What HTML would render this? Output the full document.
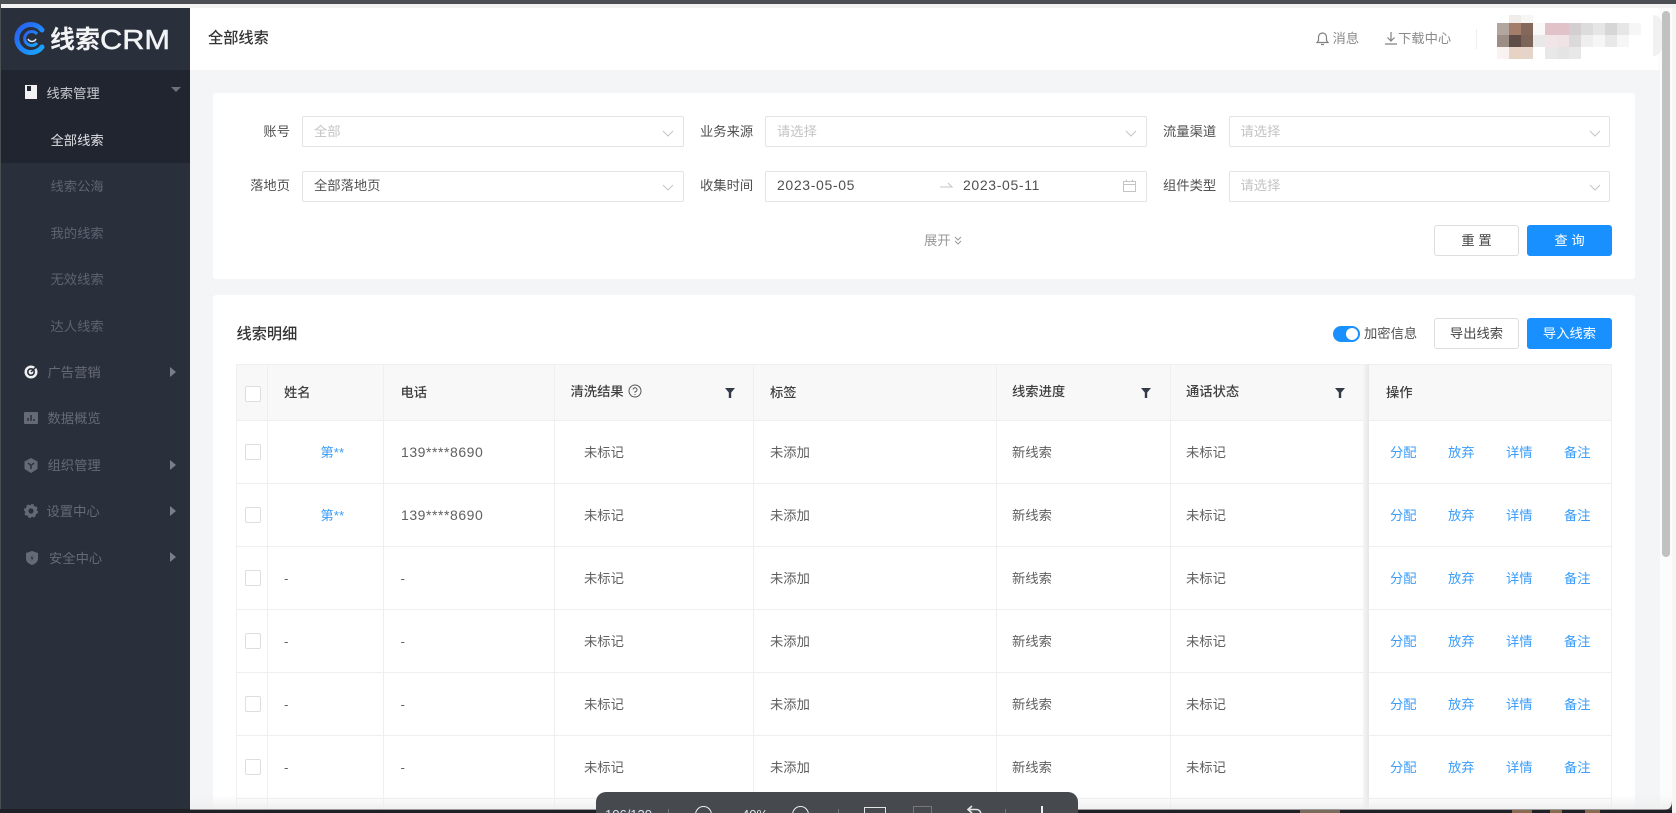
<!DOCTYPE html>
<html lang="zh-CN">
<head>
<meta charset="utf-8">
<title>全部线索</title>
<style>
html,body{margin:0;padding:0}
body{position:relative;width:1676px;height:813px;overflow:hidden;background:#f4f5f7;font-family:"Liberation Sans","Noto Sans CJK SC",sans-serif;font-size:13.3px;color:#505050}
#w{position:absolute;left:0;top:0;width:1676px;height:813px;overflow:hidden;filter:blur(.35px)}
.a,.t,.r,.v,.h{position:absolute}
.t{white-space:nowrap;line-height:20px;transform:translateY(1px)}
.m{color:#666a76}
.sub{left:51px;color:#5f6370}
.tri{position:absolute;left:170px;width:0;height:0;border-left:6px solid #7a7e8a;border-top:5.5px solid transparent;border-bottom:5.5px solid transparent}
.input{position:absolute;box-sizing:border-box;height:31px;background:#fff;border:1px solid #e3e3e3;border-radius:2px}
.lab{color:#505050;text-align:right}
.ph{color:#c4c4c4}
.btn{position:absolute;box-sizing:border-box;width:85px;height:31px;line-height:29px;text-align:center;border-radius:3px;border:1px solid #ddd;background:#fff;color:#444;font-size:13.3px}
.btn.p{background:#1890ff;border-color:#1890ff;color:#fff}
.v{width:1px;background:#efefef;top:364px;height:445px}
.h{left:236px;width:1376px;height:1px;background:#efefef}
.r{left:0;width:1676px;height:63px}
.r .t{top:22px;color:#606060}
.r .b{color:#3b9dfa}
.cb{position:absolute;box-sizing:border-box;left:245px;width:16px;height:16px;background:#fff;border:1px solid #dedede;border-radius:2px}
.th{color:#404040;font-weight:500}
.num{font-size:14px;letter-spacing:.55px;transform:none}
.f{position:absolute;top:388px}
.px{position:absolute;width:12px;height:12px}
</style>
</head>
<body>
<div id="w">
<!-- window frame -->
<div class="a" style="left:190px;top:8px;width:1468px;height:62px;background:#fff"></div>
<div class="a" style="left:0;top:0;width:1676px;height:4px;background:#4b4e53"></div>
<div class="a" style="left:0;top:4px;width:1676px;height:4px;background:#f2f2f2"></div>
<div class="a" style="left:1660px;top:70px;width:12px;height:739px;background:#fcfcfc"></div>
<div class="a" style="left:1658px;top:8px;width:14px;height:62px;background:#fcfcfc"></div>
<div class="a" style="left:1672px;top:8px;width:4px;height:805px;background:#f6f6f6"></div>
<div class="a" style="left:1662px;top:11px;width:8px;height:546px;background:#c1c1c1;border-radius:4px"></div>

<!-- sidebar -->
<div class="a" style="left:1px;top:8px;width:188.5px;height:801px;background:#2a2f3c"></div>
<div class="a" style="left:0;top:0;width:1px;height:813px;background:#4b4e53"></div>
<div class="a" style="left:1px;top:70px;width:188.5px;height:93px;background:#212530"></div>

<svg class="a" style="left:0;top:8px" width="190" height="62" viewBox="0 8 190 62">
<defs><linearGradient id="g" x1="0" y1="0" x2="1" y2="1"><stop offset="0" stop-color="#2b5cf0"/><stop offset="1" stop-color="#17a8ff"/></linearGradient></defs>
<path d="M42 30A14 14 0 1 0 42 47" fill="none" stroke="url(#g)" stroke-width="5" stroke-linecap="round"/>
<path d="M37 34A7 7 0 1 0 37 43" fill="none" stroke="url(#g)" stroke-width="3"/>
<path d="M28 39a4.5 4.5 0 0 0 8 0" fill="none" stroke="#dfeaff" stroke-width="1.5"/>
<text x="50" y="48" font-family="Liberation Sans,Noto Sans CJK SC,sans-serif" font-size="25" font-weight="700" fill="#f2f3f5" textLength="50" lengthAdjust="spacingAndGlyphs">线索</text>
<text x="100" y="49" font-family="Liberation Sans,sans-serif" font-size="28" fill="#f2f3f5" stroke="#f2f3f5" stroke-width=".5" textLength="70" lengthAdjust="spacingAndGlyphs">CRM</text>
</svg>

<svg class="a" style="left:25px;top:85px" width="12" height="14" viewBox="0 0 12 14"><rect width="12" height="14" fill="#f2f2f2"/><rect x="2" y="1" width="4" height="5" fill="#212530"/></svg>
<div class="t" style="left:46.500px;top:83px;color:#c9cbd0">线索管理</div>
<div class="a" style="left:171px;top:87px;width:0;height:0;border-top:5px solid #6d717e;border-left:5.500px solid transparent;border-right:5.500px solid transparent"></div>

<div class="t sub" style="left:50.500px;top:129.500px;color:#e0e1e4">全部线索</div>
<div class="t sub" style="left:50.500px;top:176px">线索公海</div>
<div class="t sub" style="left:50.500px;top:222.500px">我的线索</div>
<div class="t sub" style="left:50.500px;top:269px">无效线索</div>
<div class="t sub" style="left:50.500px;top:315.500px">达人线索</div>

<svg class="a" style="left:24px;top:365px" width="14" height="14" viewBox="0 0 14 14"><circle cx="7" cy="7" r="6.5" fill="#f0f0f0"/><circle cx="7" cy="7" r="3.200" fill="none" stroke="#2a2f3c" stroke-width="1.600"/><path d="M7 7L13 1" stroke="#2a2f3c" stroke-width="1.500"/></svg>
<div class="t m" style="left:47.500px;top:362px">广告营销</div><div class="tri" style="top:367px"></div>

<svg class="a" style="left:24px;top:412px" width="14" height="12" viewBox="0 0 14 12"><rect width="14" height="12" rx="1" fill="#666a76"/><path d="M4 9V6M7 9V3M10 9V7" stroke="#2a2f3c" stroke-width="1.500"/></svg>
<div class="t m" style="left:47.500px;top:408px">数据概览</div>

<svg class="a" style="left:24px;top:458px" width="14" height="15" viewBox="0 0 14 15"><path d="M7 0L13.500 3.500V11L7 15L.5 11V3.500Z" fill="#666a76"/><path d="M4 5L7 7.500L10 5M7 7.500V11" fill="none" stroke="#2a2f3c" stroke-width="1.400"/></svg>
<div class="t m" style="left:47.500px;top:455px">组织管理</div><div class="tri" style="top:460px"></div>

<svg class="a" style="left:24px;top:504px" width="14" height="14" viewBox="0 0 14 14"><circle cx="7" cy="7" r="4.300" fill="none" stroke="#666a76" stroke-width="3.400"/><circle cx="7" cy="7" r="6.200" fill="none" stroke="#666a76" stroke-width="1.700" stroke-dasharray="2.600 2.270"/></svg>
<div class="t m" style="left:46.500px;top:501px">设置中心</div><div class="tri" style="top:506px"></div>

<svg class="a" style="left:26px;top:551px" width="12" height="14" viewBox="0 0 12 14"><path d="M6 0L12 2V7.500C12 11 9 13 6 14C3 13 0 11 0 7.500V2Z" fill="#666a76"/><path d="M6.500 4L4.500 7.500H6L5.500 10L7.500 6.500H6Z" fill="#2a2f3c"/></svg>
<div class="t m" style="left:49px;top:548px">安全中心</div><div class="tri" style="top:552px"></div>

<!-- header -->
<div class="t" style="left:208px;top:28px;font-size:15.200px;font-weight:500;color:#333">全部线索</div>
<svg class="a" style="left:1316px;top:31px" width="13" height="15" viewBox="0 0 13 15"><path d="M1 11.500H12L10.500 9.500V6A4 4 0 0 0 2.500 6V9.500ZM5 13.500H8" fill="none" stroke="#808080" stroke-width="1.200"/></svg>
<div class="t" style="left:1332.500px;top:28px;color:#8a8a8a">消息</div>
<svg class="a" style="left:1385px;top:32px" width="12" height="13" viewBox="0 0 12 13"><path d="M6 0V9M2.500 5.500L6 9L9.500 5.500M0 12H12" fill="none" stroke="#808080" stroke-width="1.200"/></svg>
<div class="t" style="left:1398px;top:28px;color:#8a8a8a">下载中心</div>
<div class="a" style="left:1476px;top:29px;width:1px;height:20px;background:#eee"></div>
<div class="a" style="left:1653px;top:15px;width:9px;height:41px;background:#f1f1f1;border-radius:0 20px 20px 0"></div>

<!-- mosaic -->
<div class="px" style="left:1509px;top:15px;height:8px;background:#f0ece9"></div><div class="px" style="left:1521px;top:15px;height:8px;background:#f8f6f5"></div>
<div class="px" style="left:1497px;top:23px;background:#b3a69e"></div><div class="px" style="left:1509px;top:23px;background:#a37d69"></div><div class="px" style="left:1521px;top:23px;background:#85685c"></div><div class="px" style="left:1533px;top:23px;background:#f9f9f9"></div><div class="px" style="left:1545px;top:23px;background:#e0c2c8"></div><div class="px" style="left:1557px;top:23px;background:#e0c2c8"></div><div class="px" style="left:1569px;top:23px;background:#d3cfd1"></div><div class="px" style="left:1581px;top:23px;background:#dcdcdc"></div><div class="px" style="left:1593px;top:23px;background:#e6e6e6"></div><div class="px" style="left:1605px;top:23px;background:#d6d6d6"></div><div class="px" style="left:1617px;top:23px;background:#e6e6e6"></div><div class="px" style="left:1629px;top:23px;background:#f6f6f6"></div>
<div class="px" style="left:1497px;top:35px;background:#9c8d85"></div><div class="px" style="left:1509px;top:35px;background:#5e4c46"></div><div class="px" style="left:1521px;top:35px;background:#7c6558"></div><div class="px" style="left:1533px;top:35px;background:#e8e8e8"></div><div class="px" style="left:1545px;top:35px;background:#f1e5e8"></div><div class="px" style="left:1557px;top:35px;background:#efe3e6"></div><div class="px" style="left:1569px;top:35px;background:#dcd9db"></div><div class="px" style="left:1581px;top:35px;background:#eeeeee"></div><div class="px" style="left:1593px;top:35px;background:#f6f6f6"></div><div class="px" style="left:1605px;top:35px;background:#e8e8e8"></div><div class="px" style="left:1617px;top:35px;background:#f6f6f6"></div>
<div class="px" style="left:1497px;top:47px;background:#f8f3f1"></div><div class="px" style="left:1509px;top:47px;background:#e6d3c3"></div><div class="px" style="left:1521px;top:47px;background:#e6d3ca"></div><div class="px" style="left:1545px;top:47px;background:#e8e8e8"></div><div class="px" style="left:1557px;top:47px;background:#e4e4e4"></div><div class="px" style="left:1569px;top:47px;background:#e8e8e8"></div>

<!-- filter card -->
<div class="a" style="left:213px;top:93px;width:1422px;height:186px;background:#fff;border-radius:3px"></div>
<div class="t lab" style="left:190px;width:100px;top:121px">账号</div>
<div class="t lab" style="left:190px;width:100px;top:175px">落地页</div>
<div class="t" style="left:700px;top:121px">业务来源</div>
<div class="t" style="left:700px;top:175px">收集时间</div>
<div class="t" style="left:1163px;top:121px">流量渠道</div>
<div class="t" style="left:1163px;top:175px">组件类型</div>

<div class="input" style="left:302px;top:116px;width:381.500px"></div>
<div class="input" style="left:765px;top:116px;width:382px"></div>
<div class="input" style="left:1229px;top:116px;width:381px"></div>
<div class="input" style="left:302px;top:170.500px;width:381.500px"></div>
<div class="input" style="left:765px;top:170.500px;width:382px"></div>
<div class="input" style="left:1229px;top:170.500px;width:381px"></div>

<div class="t ph" style="left:314px;top:121px">全部</div>
<div class="t ph" style="left:777px;top:121px">请选择</div>
<div class="t ph" style="left:1240.500px;top:121px">请选择</div>
<div class="t" style="left:314px;top:175px">全部落地页</div>
<div class="t num" style="left:777px;top:175px;letter-spacing:.65px;color:#505050">2023-05-05</div>
<div class="t num" style="left:963px;top:175px;letter-spacing:.65px;color:#505050">2023-05-11</div>
<div class="t ph" style="left:1240.500px;top:175px">请选择</div>

<svg class="a" style="left:661.500px;top:129.500px" width="12" height="7" viewBox="0 0 12 7"><path d="M1 1L6 6L11 1" fill="none" stroke="#c4c4c4" stroke-width="1"/></svg>
<svg class="a" style="left:1124.500px;top:129.500px" width="12" height="7" viewBox="0 0 12 7"><path d="M1 1L6 6L11 1" fill="none" stroke="#c4c4c4" stroke-width="1"/></svg>
<svg class="a" style="left:1589px;top:129.500px" width="12" height="7" viewBox="0 0 12 7"><path d="M1 1L6 6L11 1" fill="none" stroke="#c4c4c4" stroke-width="1"/></svg>
<svg class="a" style="left:661.500px;top:183.500px" width="12" height="7" viewBox="0 0 12 7"><path d="M1 1L6 6L11 1" fill="none" stroke="#c4c4c4" stroke-width="1"/></svg>
<svg class="a" style="left:1589px;top:183.500px" width="12" height="7" viewBox="0 0 12 7"><path d="M1 1L6 6L11 1" fill="none" stroke="#c4c4c4" stroke-width="1"/></svg>
<svg class="a" style="left:940px;top:182px" width="13" height="7" viewBox="0 0 13 7"><path d="M0 5H12L8 1" fill="none" stroke="#c4c4c4" stroke-width="1"/></svg>
<svg class="a" style="left:1123px;top:179px" width="13" height="13" viewBox="0 0 13 13"><path d="M.5 2.500H12.500V12.500H.5ZM.5 5.500H12.500M3.500 .5V2.500M9.500 .5V2.500" fill="none" stroke="#c4c4c4" stroke-width="1"/></svg>

<div class="t" style="left:924px;top:230px;color:#999">展开</div>
<svg class="a" style="left:954px;top:236px" width="8" height="9" viewBox="0 0 8 9"><path d="M1 1L4 4L7 1M1 5L4 8L7 5" fill="none" stroke="#999" stroke-width="1"/></svg>

<div class="btn" style="left:1434px;top:225px">重 置</div>
<div class="btn p" style="left:1527px;top:224.500px">查 询</div>

<!-- table card -->
<div class="a" style="left:213px;top:295px;width:1422px;height:518px;background:#fff;border-radius:3px 3px 0 0"></div>
<div class="t" style="left:236.500px;top:324px;font-size:15.200px;font-weight:500;color:#333">线索明细</div>
<div class="a" style="left:1333px;top:326px;width:27px;height:16px;border-radius:8px;background:#1890ff"></div>
<div class="a" style="left:1346px;top:328px;width:12px;height:12px;border-radius:50%;background:#fff"></div>
<div class="t" style="left:1364px;top:323px">加密信息</div>
<div class="btn" style="left:1434px;top:318px">导出线索</div>
<div class="btn p" style="left:1527px;top:317.500px">导入线索</div>

<div class="a" style="left:236px;top:364px;width:1376px;height:56px;background:#f8f8f8"></div>
<div class="h" style="top:364px"></div>
<div class="h" style="top:420px"></div>
<div class="h" style="top:483px"></div>
<div class="h" style="top:546px"></div>
<div class="h" style="top:609px"></div>
<div class="h" style="top:672px"></div>
<div class="h" style="top:735px"></div>
<div class="h" style="top:797.500px"></div>
<div class="v" style="left:236px"></div>
<div class="v" style="left:267px"></div>
<div class="v" style="left:383px"></div>
<div class="v" style="left:554px"></div>
<div class="v" style="left:753px"></div>
<div class="v" style="left:996px"></div>
<div class="v" style="left:1170px"></div>
<div class="v" style="left:1611px"></div>
<div class="a" style="left:1363px;top:364px;width:6px;height:445px;background:linear-gradient(90deg,#f6f6f6,#e6e6e6)"></div>

<div class="cb" style="top:386px"></div>
<div class="t th" style="left:284px;top:382px">姓名</div>
<div class="t th" style="left:400.500px;top:382px">电话</div>
<div class="t th" style="left:570.500px;top:381px">清洗结果</div>
<svg class="a" style="left:628px;top:384px" width="14" height="14" viewBox="0 0 14 14"><circle cx="7" cy="7" r="6" fill="none" stroke="#555" stroke-width="1"/><path d="M5 5.500A2 2 0 1 1 7 7.800V8.800M7 10V11" fill="none" stroke="#555" stroke-width="1"/></svg>
<svg class="f" style="left:725px" width="10" height="10" viewBox="0 0 10 10"><path d="M0 0H10L6.200 4.500V10H3.800V4.500Z" fill="#333a48"/></svg>
<div class="t th" style="left:770px;top:382px">标签</div>
<div class="t th" style="left:1012px;top:381px">线索进度</div>
<svg class="f" style="left:1141px" width="10" height="10" viewBox="0 0 10 10"><path d="M0 0H10L6.200 4.500V10H3.800V4.500Z" fill="#333a48"/></svg>
<div class="t th" style="left:1186px;top:381px">通话状态</div>
<svg class="f" style="left:1335px" width="10" height="10" viewBox="0 0 10 10"><path d="M0 0H10L6.200 4.500V10H3.800V4.500Z" fill="#333a48"/></svg>
<div class="t th" style="left:1386px;top:382px">操作</div>

<div class="r" style="top:420px"><div class="cb" style="top:24px"></div><div class="t b" style="left:320.500px">第**</div><div class="t num" style="left:401px">139****8690</div><div class="t" style="left:584px">未标记</div><div class="t" style="left:770px">未添加</div><div class="t" style="left:1012px">新线索</div><div class="t" style="left:1186px">未标记</div><div class="t b" style="left:1390px">分配</div><div class="t b" style="left:1448px">放弃</div><div class="t b" style="left:1506px">详情</div><div class="t b" style="left:1564px">备注</div></div>
<div class="r" style="top:483px"><div class="cb" style="top:24px"></div><div class="t b" style="left:320.500px">第**</div><div class="t num" style="left:401px">139****8690</div><div class="t" style="left:584px">未标记</div><div class="t" style="left:770px">未添加</div><div class="t" style="left:1012px">新线索</div><div class="t" style="left:1186px">未标记</div><div class="t b" style="left:1390px">分配</div><div class="t b" style="left:1448px">放弃</div><div class="t b" style="left:1506px">详情</div><div class="t b" style="left:1564px">备注</div></div>
<div class="r" style="top:546px"><div class="cb" style="top:24px"></div><div class="t" style="left:284px">-</div><div class="t" style="left:400.500px">-</div><div class="t" style="left:584px">未标记</div><div class="t" style="left:770px">未添加</div><div class="t" style="left:1012px">新线索</div><div class="t" style="left:1186px">未标记</div><div class="t b" style="left:1390px">分配</div><div class="t b" style="left:1448px">放弃</div><div class="t b" style="left:1506px">详情</div><div class="t b" style="left:1564px">备注</div></div>
<div class="r" style="top:609px"><div class="cb" style="top:24px"></div><div class="t" style="left:284px">-</div><div class="t" style="left:400.500px">-</div><div class="t" style="left:584px">未标记</div><div class="t" style="left:770px">未添加</div><div class="t" style="left:1012px">新线索</div><div class="t" style="left:1186px">未标记</div><div class="t b" style="left:1390px">分配</div><div class="t b" style="left:1448px">放弃</div><div class="t b" style="left:1506px">详情</div><div class="t b" style="left:1564px">备注</div></div>
<div class="r" style="top:672px"><div class="cb" style="top:24px"></div><div class="t" style="left:284px">-</div><div class="t" style="left:400.500px">-</div><div class="t" style="left:584px">未标记</div><div class="t" style="left:770px">未添加</div><div class="t" style="left:1012px">新线索</div><div class="t" style="left:1186px">未标记</div><div class="t b" style="left:1390px">分配</div><div class="t b" style="left:1448px">放弃</div><div class="t b" style="left:1506px">详情</div><div class="t b" style="left:1564px">备注</div></div>
<div class="r" style="top:735px"><div class="cb" style="top:24px"></div><div class="t" style="left:284px">-</div><div class="t" style="left:400.500px">-</div><div class="t" style="left:584px">未标记</div><div class="t" style="left:770px">未添加</div><div class="t" style="left:1012px">新线索</div><div class="t" style="left:1186px">未标记</div><div class="t b" style="left:1390px">分配</div><div class="t b" style="left:1448px">放弃</div><div class="t b" style="left:1506px">详情</div><div class="t b" style="left:1564px">备注</div></div>

<!-- bottom fade + desktop strip -->
<div class="a" style="left:190px;top:795px;width:1482px;height:14px;background:linear-gradient(rgba(245,245,245,0),rgba(238,238,238,.9))"></div>
<div class="a" style="left:0;top:809px;width:1676px;height:4px;background:#f6f6f6"></div>
<div class="a" style="left:0;top:809px;width:1672px;height:4px;background:#1f2127"></div>
<div class="a" style="left:190px;top:808.500px;width:1482px;height:1px;background:#9a9a9a"></div>
<div class="a" style="left:1300px;top:810px;width:40px;height:3px;background:#7a6a5c"></div>
<div class="a" style="left:1512px;top:810px;width:20px;height:3px;background:#8a6a50"></div>
<div class="a" style="left:1550px;top:810px;width:12px;height:3px;background:#8a6a50"></div>
<div class="a" style="left:1585px;top:810px;width:15px;height:3px;background:#8a6a50"></div>
<svg class="a" style="left:1664px;top:801px" width="8" height="9" viewBox="0 0 8 9"><path d="M8 0V9H0C5 9 8 6 8 0Z" fill="#3a3b3d"/></svg>

<!-- viewer toolbar -->
<div class="a" style="left:596px;top:792px;width:482px;height:30px;background:#46494d;border-radius:10px 10px 0 0;overflow:hidden">
  <div class="t" style="left:9px;top:12px;color:#dbe6f5;font-size:13px">106/130</div>
  <div class="a" style="left:72px;top:17px;width:1px;height:14px;background:#777"></div>
  <div class="a" style="left:99px;top:14px;width:15px;height:15px;border:1.500px solid #f0f0f0;border-radius:50%"></div>
  <div class="t" style="left:146px;top:12px;color:#e4e4e4;font-size:13px">40%</div>
  <div class="a" style="left:196px;top:14px;width:15px;height:15px;border:1.500px solid #f0f0f0;border-radius:50%"></div>
  <div class="a" style="left:242px;top:17px;width:1px;height:14px;background:#777"></div>
  <div class="a" style="left:268px;top:15px;width:20px;height:14px;border:1.500px solid #e4e4e4"></div>
  <div class="a" style="left:317px;top:14px;width:17px;height:14px;border:1.500px solid #777"></div>
  <svg class="a" style="left:371px;top:13px" width="16" height="12" viewBox="0 0 16 12"><path d="M5 1L1 4.500L5 8M1 4.500H9C12 4.500 14 6.500 14 10V12" fill="none" stroke="#e4e4e4" stroke-width="1.600"/></svg>
  <div class="a" style="left:409px;top:17px;width:1px;height:14px;background:#777"></div>
  <div class="a" style="left:445px;top:14px;width:1.500px;height:14px;background:#f0f0f0"></div>
</div>
</div>
</body>
</html>
